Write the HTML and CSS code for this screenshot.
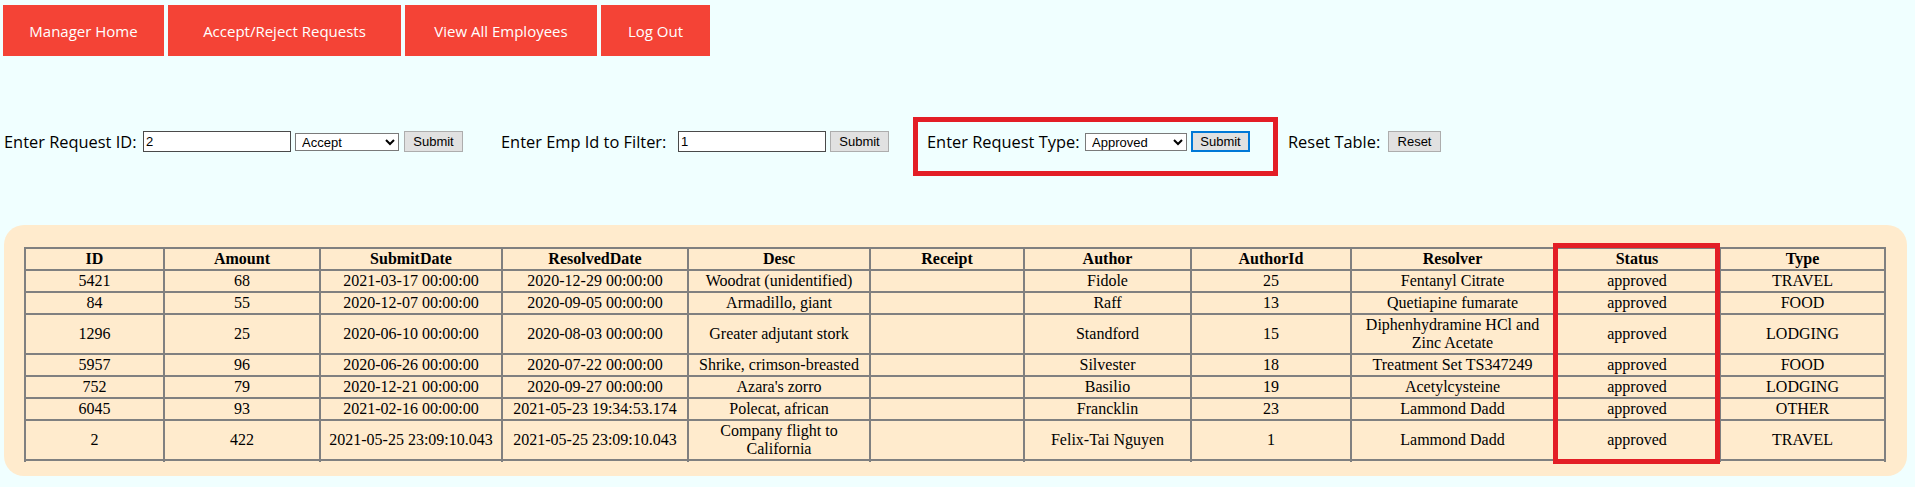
FILE: index.html
```html
<!DOCTYPE html>
<html>
<head>
<meta charset="utf-8">
<title>Manager - Requests</title>
<link rel="stylesheet" href="styles.css">
</head>
<body>
<nav class="nav">
  <a class="nav-btn w-home">Manager Home</a>
  <a class="nav-btn w-req">Accept/Reject Requests</a>
  <a class="nav-btn w-emp">View All Employees</a>
  <a class="nav-btn w-out">Log Out</a>
</nav>

<div class="forms">
  <div class="group g1">
    <label class="lbl l1">Enter Request ID:</label>
    <input class="txt" type="text" value="2">
    <select class="sel s1"><option>Accept</option><option>Reject</option></select>
    <button class="btn b-sub">Submit</button>
  </div>
  <div class="group g2">
    <label class="lbl l2">Enter Emp Id to Filter:</label>
    <input class="txt" type="text" value="1">
    <button class="btn b-sub">Submit</button>
  </div>
  <div class="group g3">
    <label class="lbl l3">Enter Request Type:</label>
    <select class="sel s2"><option>Approved</option><option>Pending</option><option>Denied</option></select>
    <button class="btn b-sub focused">Submit</button>
  </div>
  <div class="group g4">
    <label class="lbl l4">Reset Table:</label>
    <button class="btn b-reset">Reset</button>
  </div>
</div>

<div class="panel">
  <div class="table-clip">
    <table class="req-table">
      <colgroup>
        <col class="c-id"><col class="c-amt"><col class="c-sub"><col class="c-res"><col class="c-desc"><col class="c-rec"><col class="c-auth"><col class="c-aid"><col class="c-rsv"><col class="c-stat"><col class="c-type">
      </colgroup>
      <thead>
        <tr><th>ID</th><th>Amount</th><th>SubmitDate</th><th>ResolvedDate</th><th>Desc</th><th>Receipt</th><th>Author</th><th>AuthorId</th><th>Resolver</th><th>Status</th><th>Type</th></tr>
      </thead>
      <tbody>
        <tr><td>5421</td><td>68</td><td>2021-03-17 00:00:00</td><td>2020-12-29 00:00:00</td><td>Woodrat (unidentified)</td><td></td><td>Fidole</td><td>25</td><td>Fentanyl Citrate</td><td>approved</td><td>TRAVEL</td></tr>
        <tr><td>84</td><td>55</td><td>2020-12-07 00:00:00</td><td>2020-09-05 00:00:00</td><td>Armadillo, giant</td><td></td><td>Raff</td><td>13</td><td>Quetiapine fumarate</td><td>approved</td><td>FOOD</td></tr>
        <tr><td>1296</td><td>25</td><td>2020-06-10 00:00:00</td><td>2020-08-03 00:00:00</td><td>Greater adjutant stork</td><td></td><td>Standford</td><td>15</td><td>Diphenhydramine HCl and Zinc Acetate</td><td>approved</td><td>LODGING</td></tr>
        <tr><td>5957</td><td>96</td><td>2020-06-26 00:00:00</td><td>2020-07-22 00:00:00</td><td>Shrike, crimson-breasted</td><td></td><td>Silvester</td><td>18</td><td>Treatment Set TS347249</td><td>approved</td><td>FOOD</td></tr>
        <tr><td>752</td><td>79</td><td>2020-12-21 00:00:00</td><td>2020-09-27 00:00:00</td><td>Azara's zorro</td><td></td><td>Basilio</td><td>19</td><td>Acetylcysteine</td><td>approved</td><td>LODGING</td></tr>
        <tr><td>6045</td><td>93</td><td>2021-02-16 00:00:00</td><td>2021-05-23 19:34:53.174</td><td>Polecat, african</td><td></td><td>Francklin</td><td>23</td><td>Lammond Dadd</td><td>approved</td><td>OTHER</td></tr>
        <tr><td>2</td><td>422</td><td>2021-05-25 23:09:10.043</td><td>2021-05-25 23:09:10.043</td><td>Company flight to California</td><td></td><td>Felix-Tai Nguyen</td><td>1</td><td>Lammond Dadd</td><td>approved</td><td>TRAVEL</td></tr>
        <tr class="row-cut"><td></td><td></td><td></td><td></td><td></td><td></td><td></td><td></td><td></td><td></td><td></td></tr>
      </tbody>
    </table>
  </div>
</div>

<div class="mark mark-type"></div>
<div class="mark mark-status"></div>
</body>
</html>
```

FILE: styles.css
```css
html, body {
  margin: 0;
  padding: 0;
}

body {
  position: relative;
  background: #f0ffff;
  font-family: "Open Sans", "DejaVu Sans", sans-serif;
  color: #000;
  min-height: 487px;
}

/* ---------- navigation ---------- */
.nav {
  display: flex;
  gap: 4px;
  padding: 5px 0 0 3px;
}

.nav-btn {
  display: flex;
  align-items: center;
  justify-content: center;
  height: 51px;
  background: #f44336;
  color: #fff;
  font-size: 15px;
  text-decoration: none;
  white-space: nowrap;
}

.w-home { width: 161px; }
.w-req  { width: 233px; }
.w-emp  { width: 192px; }
.w-out  { width: 109px; }

/* ---------- forms row ---------- */
.forms {
  display: flex;
  align-items: center;
  height: 21px;
  margin-top: 75px;
  padding-left: 4px;
  gap: 38px;
}

.group {
  display: flex;
  align-items: center;
  gap: 4px;
}

.lbl {
  font-size: 16.4px;
  white-space: nowrap;
}

.l1 { width: 135px; }
.l2 { width: 173px; }
.l3 { width: 154px; }
.l4 { width: 96px; }

.txt {
  box-sizing: border-box;
  width: 148px;
  height: 21px;
  margin: 0;
  padding: 0 2px;
  border: 1px solid #4a4a4a;
  background: #fff;
  font: 13px "Liberation Sans", Arial, sans-serif;
  color: #000;
}

.sel {
  box-sizing: border-box;
  height: 18px;
  margin: 0;
  padding: 0 0 0 2px;
  border: 1px solid #7a7a7a;
  border-radius: 0;
  background: #fff;
  font: 13px "Liberation Sans", Arial, sans-serif;
  color: #000;
}

.s1 { width: 104px; margin-right: 1px; }
.s2 { width: 102px; }

.btn {
  box-sizing: border-box;
  height: 21px;
  margin: 0;
  padding: 0;
  border: 1px solid #adadad;
  border-radius: 0;
  background: #e1e1e1;
  font: 13px "Liberation Sans", Arial, sans-serif;
  color: #000;
}

.b-sub { width: 59px; }
.b-reset { width: 53px; }

.focused {
  border: 2px solid #0078d7;
}

/* ---------- table panel ---------- */
.panel {
  margin: 73px 8px 0 4px;
  height: 251px;
  box-sizing: border-box;
  padding: 22px 21px 0 20px;
  background: #ffebcd;
  border-radius: 20px;
}

.table-clip {
  height: 215px;
  overflow: hidden;
}

.req-table {
  width: 1862px;
  table-layout: fixed;
  border-collapse: separate;
  border-spacing: 0;
  border: 1px solid #808080;
  font-family: "Liberation Serif", "Times New Roman", serif;
  font-size: 16px;
}

.req-table th,
.req-table td {
  border: 1px solid #808080;
  padding: 1px;
  text-align: center;
  vertical-align: middle;
}

.req-table th {
  font-weight: bold;
}

.row-cut td {
  height: 18px;
}

.c-id   { width: 139px; }
.c-amt  { width: 156px; }
.c-sub  { width: 182px; }
.c-res  { width: 186px; }
.c-desc { width: 182px; }
.c-rec  { width: 154px; }
.c-auth { width: 167px; }
.c-aid  { width: 160px; }
.c-rsv  { width: 203px; }
.c-stat { width: 166px; }
.c-type { width: 165px; }

/* ---------- red annotation marks ---------- */
.mark {
  position: absolute;
  box-sizing: border-box;
  border: 5px solid #e31e26;
  pointer-events: none;
}

.mark-type {
  left: 913px;
  top: 117px;
  width: 365px;
  height: 59px;
}

.mark-status {
  left: 1553px;
  top: 243px;
  width: 167px;
  height: 221px;
}
```
